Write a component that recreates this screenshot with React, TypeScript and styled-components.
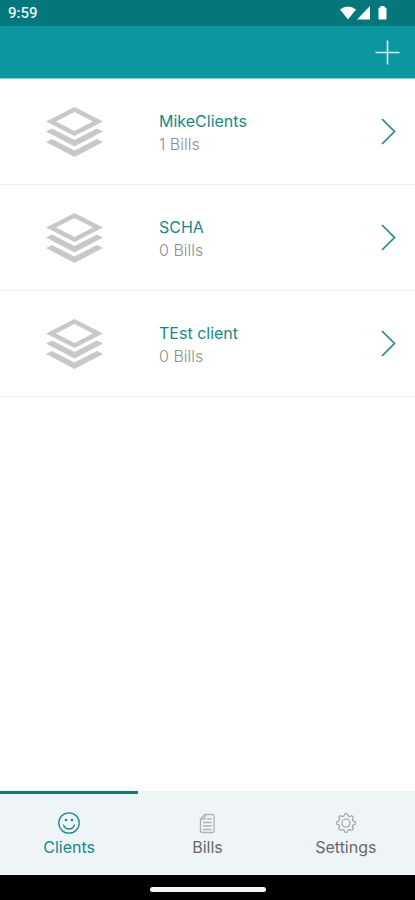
import React from "react";
import styled, { createGlobalStyle } from "styled-components";

const teal = "#16898e";

const GlobalStyle = createGlobalStyle`
  * { box-sizing: border-box; }
  body {
    margin: 0;
    background: #fff;
    font-family: Inter, "Liberation Sans", sans-serif;
  }
  button { font: inherit; border: 0; padding: 0; background: none; cursor: pointer; }
  svg { display: block; }
`;

const Screen = styled.div`
  display: flex;
  flex-direction: column;
  min-height: 100vh;
`;

const StatusBar = styled.div`
  display: flex;
  align-items: center;
  justify-content: space-between;
  height: 26px;
  padding: 0 27px 0 8px;
  background: #03777c;
  color: #e9f6f6;
`;

const Time = styled.time`
  font: 500 15px/26px Roboto, sans-serif;
`;

const StatusIcons = styled.div`
  display: flex;
  align-items: center;
  gap: 1px;
`;

const Header = styled.header`
  display: flex;
  align-items: center;
  justify-content: flex-end;
  height: 53px;
  padding-right: 15px;
  background: #0a979f;
  border-bottom: 1px solid #8accd0;
`;

const AddButton = styled.button`
  color: #d5eff0;
`;

const List = styled.ul`
  flex: 1;
  margin: 0;
  padding: 0;
  list-style: none;
`;

const Item = styled.li`
  border-bottom: 1px solid #f1f1f1;
`;

const RowButton = styled.button`
  display: flex;
  align-items: center;
  width: 100%;
  height: 105px;
  padding: 0 19px 0 46px;
  text-align: left;
`;

const Details = styled.span`
  display: flex;
  flex: 1;
  flex-direction: column;
  margin-left: 56px;
  padding-top: 2px;
`;

const Name = styled.span`
  color: ${teal};
  font-size: 16px;
  line-height: 23px;
`;

const Count = styled.span`
  color: #8e8e8e;
  font-size: 16px;
  font-weight: 300;
  line-height: 23px;
`;

const Tabs = styled.nav`
  display: grid;
  grid-template-columns: repeat(3, 1fr);
  height: 84px;
  background: #eff5f6;
`;

const Tab = styled.button<{ $active?: boolean }>`
  display: flex;
  flex-direction: column;
  align-items: center;
  padding-top: 17px;
  border-top: 3px solid ${(p) => (p.$active ? "#16777b" : "transparent")};
  color: ${(p) => (p.$active ? teal : "#66696a")};
  font-size: 16px;
  line-height: 24px;
`;

const TabIcon = styled.span<{ $active?: boolean }>`
  color: ${(p) => (p.$active ? teal : "#999d9e")};
`;

const GestureBar = styled.div`
  display: flex;
  align-items: center;
  justify-content: center;
  height: 25px;
  padding-top: 4px;
  background: #000;
`;

const GestureHandle = styled.div`
  width: 116px;
  height: 5px;
  border-radius: 3px;
  background: #f4f4f4;
`;

const LayersIcon = () => (
  <svg width="57" height="50" viewBox="0 0 57 50" fill="#c8c8c8" aria-hidden="true">
    <path fillRule="evenodd" d="M28.5 0 57 14.5 28.5 29 0 14.5ZM28.5 5 10 14.5l18.5 9.5L47 14.5Z" />
    <path d="M0 24.5 6 21.5 28.5 33 51 21.5l6 3L28.5 39.5Z" />
    <path d="M0 35 6 32 28.5 43.5 51 32l6 3L28.5 50Z" />
  </svg>
);

const ChevronIcon = () => (
  <svg width="15" height="27" viewBox="0 0 15 27" fill="none" stroke="#27898f" strokeWidth="1.7" aria-hidden="true">
    <path d="M1 1 13.5 13.5 1 26" />
  </svg>
);

const SmileIcon = () => (
  <svg width="24" height="24" viewBox="0 0 24 24" fill="none" stroke="currentColor" strokeWidth="1.3" strokeLinecap="round" aria-hidden="true">
    <circle cx="12" cy="12" r="10.2" />
    <path d="M6.500 14c1 2.500 3 4 5.500 4s4.500-1.500 5.500-4" />
    <circle cx="9" cy="9" r="1.3" fill="currentColor" stroke="none" />
    <circle cx="15" cy="9" r="1.3" fill="currentColor" stroke="none" />
  </svg>
);

const BillIcon = () => (
  <svg width="24" height="24" viewBox="0 0 24 24" fill="none" stroke="#b0b3b4" strokeWidth="1.4" strokeLinejoin="round" aria-hidden="true">
    <path d="M10 3.500h7.500q1.500 0 1.500 1.500v15q0 1.500-1.500 1.500H7.500Q5.500 21.500 5.500 20V8Z" />
    <path d="M10 3.500V8H5.500M12 8h4.500M8 11.500h8.500M8 15h8.500M8 18.500h8.500" />
  </svg>
);

const gearOutline = Array.from({ length: 96 }, (_, i) => {
  const angle = (i / 96) * Math.PI * 2;
  const radius = 8.3 + 1.1 * Math.tanh(2 * Math.cos(angle * 8));
  const x = 12 + radius * Math.cos(angle);
  const y = 12 + radius * Math.sin(angle);
  return `${i ? "L" : "M"}${x.toFixed(2)} ${y.toFixed(2)}`;
}).join("") + "Z";

const GearIcon = () => (
  <svg width="24" height="24" viewBox="0 0 24 24" fill="none" stroke="currentColor" strokeWidth="1.1" strokeLinejoin="round" aria-hidden="true">
    <path d={gearOutline} />
    <circle cx="12" cy="12" r="4" />
  </svg>
);

const clients = [
  { name: "MikeClients", bills: 1 },
  { name: "SCHA", bills: 0 },
  { name: "TEst client", bills: 0 },
];

export default function App() {
  return (
    <Screen>
      <GlobalStyle />
      <StatusBar>
        <Time>9:59</Time>
        <StatusIcons>
          <svg width="16" height="14" viewBox="0 0 16 14" fill="#fff" aria-hidden="true">
            <path d="M0 3.500Q8-2.500 16 3.500L8 13.500Z" />
          </svg>
          <svg width="13" height="14" viewBox="0 0 13 14" fill="#fff" aria-hidden="true">
            <path d="M13 0v13.500H0Z" />
          </svg>
          <svg width="17" height="14" viewBox="0 0 17 14" fill="#fff" aria-hidden="true">
            <path d="M9.500 0h4v1.500h1q1 0 1 1v10q0 1-1 1h-6q-1 0-1-1v-10q0-1 1-1h1Z" />
          </svg>
        </StatusIcons>
      </StatusBar>
      <Header>
        <AddButton type="button" aria-label="Add client">
          <svg width="25" height="25" viewBox="0 0 25 25" stroke="currentColor" strokeWidth="1.6" aria-hidden="true">
            <path d="M12.500 0.500v24M0.500 12.500h24" />
          </svg>
        </AddButton>
      </Header>
      <List>
        {clients.map((client) => (
          <Item key={client.name}>
            <RowButton type="button">
              <LayersIcon />
              <Details>
                <Name>{client.name}</Name>
                <Count>{client.bills} Bills</Count>
              </Details>
              <ChevronIcon />
            </RowButton>
          </Item>
        ))}
      </List>
      <Tabs>
        <Tab type="button" $active aria-current="page">
          <TabIcon $active><SmileIcon /></TabIcon>
          Clients
        </Tab>
        <Tab type="button">
          <TabIcon><BillIcon /></TabIcon>
          Bills
        </Tab>
        <Tab type="button">
          <TabIcon><GearIcon /></TabIcon>
          Settings
        </Tab>
      </Tabs>
      <GestureBar>
        <GestureHandle />
      </GestureBar>
    </Screen>
  );
}
